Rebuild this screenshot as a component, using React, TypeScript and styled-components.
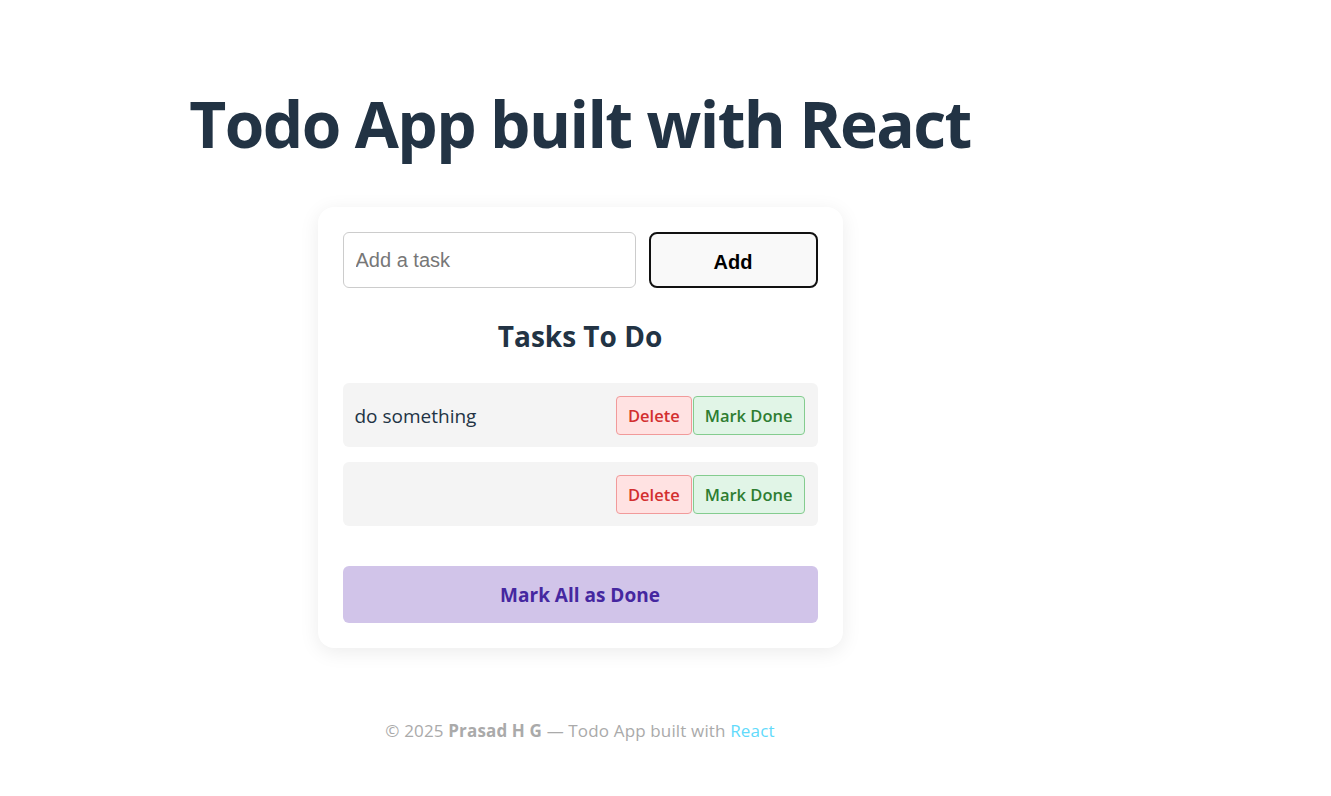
import React from "react";
import styled, { createGlobalStyle } from "styled-components";

const Global = createGlobalStyle`
  html, body { margin: 0; padding: 0; background: #ffffff; }
  body { font-family: "Open Sans", "Noto Sans", sans-serif; }
  * { box-sizing: border-box; }
`;

const Page = styled.div`
  width: 1160px;
  display: flex;
  flex-direction: column;
  align-items: center;
  padding-top: 84px;
`;

const Title = styled.h1`
  margin: 0 0 43px;
  font-size: 64px;
  line-height: 80px;
  font-weight: 700;
  color: #223344;
  letter-spacing: -1.6px;
`;

const Card = styled.div`
  width: 525px;
  background: #ffffff;
  border-radius: 16px;
  box-shadow: 0 4px 20px rgba(0, 0, 0, 0.08);
  padding: 25px;
  display: flex;
  flex-direction: column;
`;

const InputRow = styled.div`
  display: flex;
  gap: 13px;
`;

const TaskInput = styled.input`
  width: 293px;
  height: 56px;
  border: 1px solid #cccccc;
  border-radius: 6px;
  padding: 0 12px;
  font-family: "Liberation Sans", Arial, sans-serif;
  font-size: 20px;
  color: #222;
  outline: none;
  &::placeholder { color: #777777; }
`;

const AddButton = styled.button`
  flex: 1;
  height: 56px;
  border: 2px solid #111111;
  border-radius: 8px;
  background: #f9f9f9;
  font-family: "Liberation Sans", Arial, sans-serif;
  font-size: 20px;
  font-weight: 700;
  color: #000;
  padding-top: 6px;
`;

const SectionTitle = styled.h2`
  margin: 30px 0 29px;
  text-align: center;
  font-size: 28px;
  line-height: 36px;
  font-weight: 700;
  color: #223344;
`;

const List = styled.div`
  display: flex;
  flex-direction: column;
  gap: 15px;
`;

const Row = styled.div`
  height: 64px;
  background: #f4f4f4;
  border-radius: 6px;
  display: flex;
  align-items: center;
  padding: 0 13px 0 12px;
`;

const TaskText = styled.span`
  flex: 1;
  font-size: 19px;
  color: #223344;
  padding-top: 2px;
`;

const Actions = styled.div`
  display: flex;
  gap: 1px;
`;

const SmallButton = styled.button<{ $tone: "red" | "green" }>`
  height: 39px;
  padding: 0 11px;
  border-radius: 4px;
  font-family: "Open Sans", "Noto Sans", sans-serif;
  font-size: 16.5px;
  font-weight: 600;
  border: 1px solid ${(p) => (p.$tone === "red" ? "#f19a9a" : "#84cc8f")};
  background: ${(p) => (p.$tone === "red" ? "#ffe2e2" : "#e1f5e7")};
  color: ${(p) => (p.$tone === "red" ? "#d32f2f" : "#2e7d32")};
`;

const MarkAll = styled.button`
  margin-top: 40px;
  height: 57px;
  border: none;
  border-radius: 6px;
  background: #d1c4e9;
  color: #4527a0;
  font-family: "Open Sans", "Noto Sans", sans-serif;
  font-size: 19px;
  font-weight: 700;
`;

const Footer = styled.footer`
  margin-top: 71px;
  font-size: 17px;
  letter-spacing: 0.15px;
  color: #aaaaaa;
`;

const Strong = styled.strong`
  font-weight: 700;
`;

const ReactLink = styled.span`
  color: #61dafb;
`;

const tasks = ["do something", ""];

export default function App() {
  return (
    <>
      <Global />
      <Page>
        <Title>Todo App built with React</Title>
        <Card>
          <InputRow>
            <TaskInput placeholder="Add a task" />
            <AddButton>Add</AddButton>
          </InputRow>
          <SectionTitle>Tasks To Do</SectionTitle>
          <List>
            {tasks.map((t, i) => (
              <Row key={i}>
                <TaskText>{t}</TaskText>
                <Actions>
                  <SmallButton $tone="red">Delete</SmallButton>
                  <SmallButton $tone="green">Mark Done</SmallButton>
                </Actions>
              </Row>
            ))}
          </List>
          <MarkAll>Mark All as Done</MarkAll>
        </Card>
        <Footer>
          © 2025 <Strong>Prasad H G</Strong> — Todo App built with <ReactLink>React</ReactLink>
        </Footer>
      </Page>
    </>
  );
}
